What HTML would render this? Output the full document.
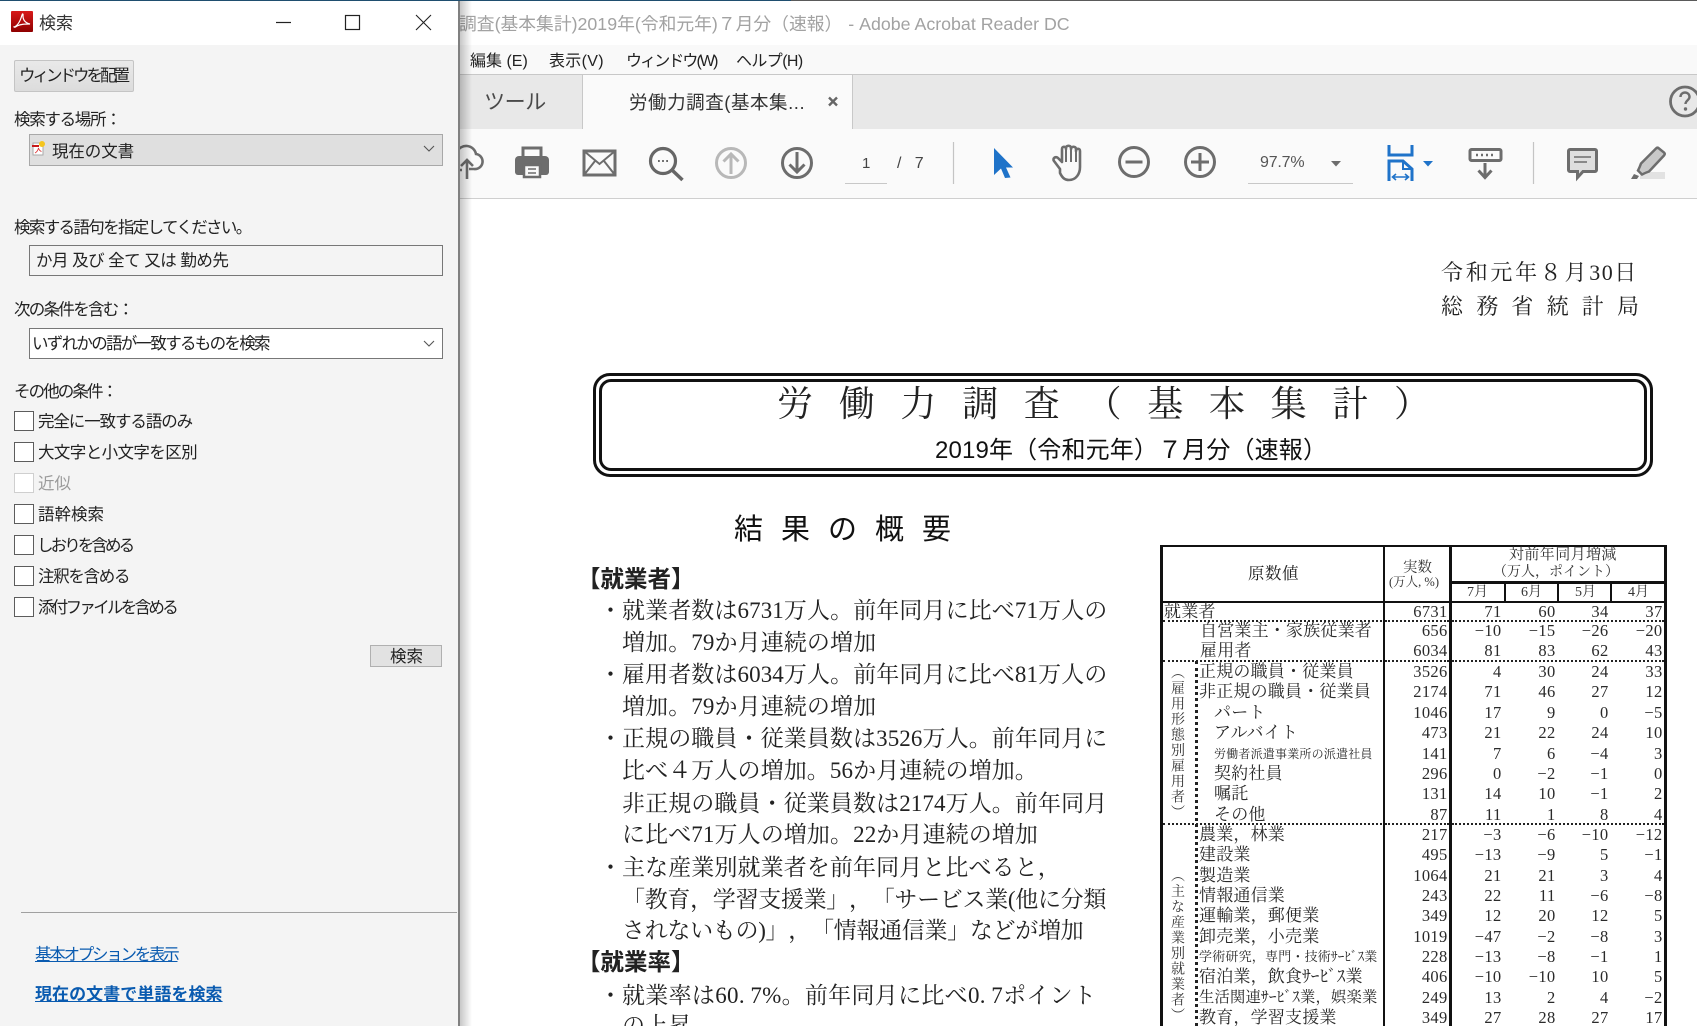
<!DOCTYPE html>
<html lang="ja"><head><meta charset="utf-8"><title>検索</title>
<style>
html,body{margin:0;padding:0;width:1697px;height:1026px;overflow:hidden;background:#fff}
body{position:relative;font-family:"Liberation Sans","Noto Sans CJK JP",sans-serif;color:#222;text-spacing-trim:space-all}
.b{position:absolute}
.t{position:absolute;white-space:nowrap;line-height:24px;height:24px}
.p{font-size:16.5px;color:#222}
.s{font-family:"Liberation Serif","Noto Serif CJK JP","Noto Serif CJK SC",serif;color:#222}
.m{font-size:23px;letter-spacing:.1px;left:622px;color:#222}
.dt{letter-spacing:.25em}
.cb{position:absolute;left:14px;width:18px;height:18px;border:1px solid #5c5c5c;background:#fff}
.r{position:absolute;left:0;width:1697px;height:20px;line-height:20px;font-family:"Liberation Serif","Noto Serif CJK JP","Noto Serif CJK SC",serif;font-size:16.5px;letter-spacing:.3px;color:#2a2a2a;white-space:nowrap}
.r span{position:absolute}
.r span:nth-child(1){left:1199px;font-size:17px;letter-spacing:.2px}
.r span:nth-child(2){right:249.5px}
.r span:nth-child(3){right:195.500px}
.r span:nth-child(4){right:141.500px}
.r span:nth-child(5){right:88.500px}
.r span:nth-child(6){right:34.500px}
.dh{position:absolute;height:0;border-top:2px dotted #222}
.k{position:absolute;background:#111}
.v{position:absolute;writing-mode:vertical-rl;white-space:nowrap;font-family:"Liberation Serif","Noto Serif CJK JP","Noto Serif CJK SC",serif;font-size:14px;letter-spacing:1.500px;color:#333}
</style></head><body>

<!-- Reader window chrome -->
<div class="b" style="left:0;top:0;width:791px;height:1px;background:#1f4e6f"></div>
<div class="b" style="left:791px;top:0;width:906px;height:1px;background:#5a5a5a"></div>
<div class="t" style="left:459px;top:12px;font-size:17.800px;color:#a2a2a2">調査(基本集計)2019年(令和元年)７月分（速報） <span style="margin-left:1px">- Adobe Acrobat Reader DC</span></div>

<div class="b" style="left:459px;top:45px;width:1238px;height:29px;background:#f9f9f9"></div>
<div class="t" style="left:470px;top:50px;font-size:16px;color:#222">編集 (E)</div>
<div class="t" style="left:549px;top:50px;font-size:16px;color:#222;letter-spacing:.3px">表示(V)</div>
<div class="t" style="left:626px;top:50px;font-size:16px;color:#222;letter-spacing:-1.900px">ウィンドウ(W)</div>
<div class="t" style="left:736px;top:50px;font-size:16px;color:#222;letter-spacing:-.600px">ヘルプ(H)</div>

<div class="b" style="left:459px;top:74px;width:1238px;height:54px;background:#e8e8e8;border-top:1px solid #c8c8c8;border-bottom:1px solid #c8c8c8"></div>
<div class="b" style="left:582px;top:75px;width:269px;height:55px;background:#fafafa;border-left:1px solid #c8c8c8;border-right:1px solid #c8c8c8"></div>
<div class="t" style="left:484px;top:91px;font-size:21px;color:#4a4a4a;letter-spacing:-.4px">ツール</div>
<div class="t" style="left:629px;top:91px;font-size:18.500px;color:#333;letter-spacing:.550px">労働力調査(基本集...</div>

<div class="b" style="left:459px;top:129px;width:1238px;height:69px;background:#fafafa;border-bottom:1px solid #cfcfcf"></div>
<div class="t" style="left:862px;top:152px;font-size:15px;color:#444">1</div>
<div class="t" style="left:897px;top:152px;font-size:16px;color:#444">/&nbsp;&nbsp;&nbsp;7</div>
<div class="t" style="left:1260px;top:151px;font-size:16px;color:#555;letter-spacing:-.200px">97.7%</div>

<svg class="b" style="left:0;top:0" width="1697" height="1026" viewBox="0 0 1697 1026" fill="none">
 <path d="M845 183.500H887M1248 183.500H1353" stroke="#c8c8c8"/>
 <path d="M953.500 142V184M1533.500 142V184" stroke="#c4c4c4" stroke-width="1.200"/>
 <path d="M462 170h-3a9 9 0 0 1-2-18a10 10 0 0 1 19 2a7.500 7.500 0 0 1-2 15h-5" stroke="#6d6d6d" stroke-width="2.600"/>
 <path d="M467 179V160M461 166l6-6 6 6" stroke="#6d6d6d" stroke-width="2.600"/>
 <rect x="523" y="148" width="18" height="10" stroke="#6d6d6d" stroke-width="3"/>
 <path d="M519 156h26a4 4 0 0 1 4 4v12a3 3 0 0 1-3 3h-28a3 3 0 0 1-3-3v-12a4 4 0 0 1 4-4z" fill="#6d6d6d"/>
 <rect x="524" y="165" width="16" height="12" fill="#fafafa" stroke="#6d6d6d" stroke-width="2.500"/>
 <path d="M528 169h8M528 173h8" stroke="#6d6d6d" stroke-width="1.500"/>
 <rect x="584" y="151" width="31" height="24" stroke="#6d6d6d" stroke-width="3"/>
 <path d="M584 151l15.500 13 15.500-13M584 175l11-14M615 175l-11-14" stroke="#6d6d6d" stroke-width="2"/>
 <circle cx="663" cy="161" r="12.500" stroke="#666" stroke-width="3.200"/>
 <path d="M672 170l10.500 10" stroke="#666" stroke-width="3.500"/>
 <path d="M658 161h1.800M662.100 161h1.800M666.200 161h1.800" stroke="#666" stroke-width="2"/>
 <circle cx="731" cy="163" r="14.500" stroke="#b8b8b8" stroke-width="3"/>
 <path d="M731 174V154M723.500 161.500L731 154l7.500 7.500" stroke="#b8b8b8" stroke-width="3"/>
 <circle cx="797" cy="163" r="14.500" stroke="#6d6d6d" stroke-width="3"/>
 <path d="M797 152V172M789.500 164.500L797 172l7.500-7.500" stroke="#6d6d6d" stroke-width="3"/>
 <path d="M994 148L1013 167.500H1006L1010.500 177.500L1005 178L1001 168.500L994 175Z" fill="#1f73c9"/>
 <path d="M1060 169l-6-8c-2-3 2-5 4-3l4 4v-13c0-3 4-3 4 0v-1c0-3 5-3 5 0v1c0-3 5-3 5 0v2c0-3 4-3 4 0v16c0 7-4 13-11 13c-5 0-7-3-9-7z" stroke="#6d6d6d" stroke-width="2.600" stroke-linejoin="round"/>
 <path d="M1066 149v13M1071 148v14M1076 149v13" stroke="#6d6d6d" stroke-width="2"/>
 <circle cx="1134" cy="162" r="14.500" stroke="#6d6d6d" stroke-width="3"/>
 <path d="M1125.500 162h17" stroke="#6d6d6d" stroke-width="3"/>
 <circle cx="1200" cy="162" r="14.500" stroke="#6d6d6d" stroke-width="3"/>
 <path d="M1191 162h18M1200 153v18" stroke="#6d6d6d" stroke-width="3"/>
 <path d="M1331 161h10l-5 5.500z" fill="#6d6d6d"/>
 <path d="M1389 145v10h23v-10" stroke="#1f73c9" stroke-width="3"/>
 <path d="M1389 181v-20h14l9 8v12" stroke="#1f73c9" stroke-width="3"/>
 <path d="M1403 161v8h9" stroke="#1f73c9" stroke-width="2"/>
 <path d="M1393 177h15M1396 174l-3.500 3 3.500 3M1405 174l3.500 3-3.500 3" stroke="#1f73c9" stroke-width="1.600"/>
 <path d="M1423 161h10l-5 5.500z" fill="#1f73c9"/>
 <rect x="1470" y="149.500" width="31" height="11" rx="1.500" stroke="#6d6d6d" stroke-width="3"/>
 <path d="M1476 155h2M1481 155h2M1486 155h2M1491 155h2" stroke="#6d6d6d" stroke-width="2.500"/>
 <path d="M1485 163V177M1478.500 170.500l6.500 7 6.500-7" stroke="#6d6d6d" stroke-width="3"/>
 <path d="M1570 149.500h25a1.500 1.500 0 0 1 1.500 1.500v19a1.500 1.500 0 0 1-1.500 1.500h-12l-5.500 6v-6h-7.500a1.500 1.500 0 0 1-1.500-1.500v-19a1.500 1.500 0 0 1 1.500-1.500z" fill="#dedede" stroke="#6d6d6d" stroke-width="3"/>
 <path d="M1574 157h17M1574 162h13" stroke="#6d6d6d" stroke-width="1.500"/>
 <path d="M1640 172h25v7h-25z" fill="#e2e2e2"/>
 <path d="M1659 148.500l5 4c1 1 1 2 0 3l-15 16c-3 1-5 2-7 3l-4-4c1-2 2-4 3-7l15-15c1-1 2-1 3 0z" fill="#c9c9c9" stroke="#6d6d6d" stroke-width="2.500"/>
 <path d="M1631 179l3-5 5 2-2 3z" fill="#6d6d6d"/>
 <circle cx="1685" cy="101.500" r="14.500" stroke="#6d6d6d" stroke-width="2.800"/>
 <path d="M1680.500 97c0-6 9-6 9 0c0 3-4 3.500-4 7" stroke="#6d6d6d" stroke-width="2.400"/>
 <circle cx="1685.500" cy="109" r="1.700" fill="#6d6d6d"/>
 <path d="M829 97.500l8 8M837 97.500l-8 8" stroke="#666" stroke-width="2.400"/>
</svg>

<!-- Document -->
<div class="t s" style="left:1441px;top:261px;font-size:22px;letter-spacing:2.700px">令和元年８月<span style="letter-spacing:1.500px">30</span>日</div>
<div class="t s" style="left:1441px;top:295px;font-size:22px;letter-spacing:13.200px">総務省統計局</div>

<div class="b" style="left:593px;top:373px;width:1054px;height:98px;border:3px solid #111;border-radius:17px"></div>
<div class="b" style="left:599px;top:379px;width:1042px;height:86px;border:3px solid #111;border-radius:12px"></div>
<div class="t s" style="left:777px;top:384px;height:40px;line-height:40px;font-size:36px;letter-spacing:25.700px">労働力調査（基本集計）</div>
<div class="t" style="left:935px;top:437px;height:28px;line-height:28px;font-size:24px;color:#111;letter-spacing:.150px">2019年（令和元年）７月分（速報）</div>
<div class="t" style="left:734px;top:510px;height:40px;line-height:40px;font-size:29px;letter-spacing:18px;color:#111">結果の概要</div>

<div class="t" style="left:577px;top:567px;font-size:23.500px;font-weight:700;color:#222">【就業者】</div>
<div class="t s m" style="left:599px;top:599px">・</div><div class="t s m" style="top:599px">就業者数は6731万人。前年同月に比べ71万人の</div>
<div class="t s m" style="top:631px">増加。79か月連続の増加</div>
<div class="t s m" style="left:599px;top:663px">・</div><div class="t s m" style="top:663px">雇用者数は6034万人。前年同月に比べ81万人の</div>
<div class="t s m" style="top:695px">増加。79か月連続の増加</div>
<div class="t s m" style="left:599px;top:727px">・</div><div class="t s m" style="top:727px">正規の職員・従業員数は3526万人。前年同月に</div>
<div class="t s m" style="top:759px">比べ４万人の増加。56か月連続の増加。</div>
<div class="t s m" style="top:792px">非正規の職員・従業員数は2174万人。前年同月</div>
<div class="t s m" style="top:823px">に比べ71万人の増加。22か月連続の増加</div>
<div class="t s m" style="left:599px;top:856px">・</div><div class="t s m" style="top:856px">主な産業別就業者を前年同月と比べると，</div>
<div class="t s m" style="top:888px;letter-spacing:-.3px">「教育，学習支援業」，「サービス業(他に分類</div>
<div class="t s m" style="top:919px;letter-spacing:-.3px">されないもの)」，「情報通信業」などが増加</div>
<div class="t" style="left:577px;top:950px;font-size:23.500px;font-weight:700;color:#222">【就業率】</div>
<div class="t s m" style="left:599px;top:984px">・</div><div class="t s m" style="top:984px;letter-spacing:.3px">就業率は60<span class="dt">.</span>7%。前年同月に比べ0<span class="dt">.</span>7ポイント</div>
<div class="t s m" style="top:1014px">の上昇</div>

<!-- Table frame -->
<div class="k" style="left:1160px;top:544.500px;width:507px;height:2.500px"></div>
<div class="k" style="left:1160px;top:544.500px;width:2.500px;height:481.500px"></div>
<div class="k" style="left:1664px;top:544.500px;width:3px;height:481.500px"></div>
<div class="k" style="left:1382.500px;top:544.500px;width:2.500px;height:481.500px"></div>
<div class="k" style="left:1449px;top:544.500px;width:3px;height:481.500px"></div>
<div class="k" style="left:1160px;top:600.500px;width:507px;height:2.500px"></div>
<div class="k" style="left:1449px;top:581px;width:218px;height:3px"></div>
<div class="k" style="left:1504px;top:581px;width:2px;height:20px"></div>
<div class="k" style="left:1557px;top:581px;width:2px;height:20px"></div>
<div class="k" style="left:1610px;top:581px;width:2px;height:20px"></div>
<div class="dh" style="left:1163px;top:619.500px;width:219px"></div>
<div class="dh" style="left:1385px;top:619.500px;width:64px"></div>
<div class="dh" style="left:1452px;top:619.500px;width:212px"></div>
<div class="dh" style="left:1163px;top:660px;width:219px"></div>
<div class="dh" style="left:1385px;top:660px;width:64px"></div>
<div class="dh" style="left:1452px;top:660px;width:212px"></div>
<div class="dh" style="left:1163px;top:823px;width:219px"></div>
<div class="dh" style="left:1385px;top:823px;width:64px"></div>
<div class="dh" style="left:1452px;top:823px;width:212px"></div>
<div class="b" style="left:1195px;top:661px;height:365px;width:0;border-left:3px dotted #222"></div>

<div class="t s" style="left:1248px;top:562px;font-size:16.500px;letter-spacing:.500px">原数値</div>
<div class="t s" style="left:1403px;top:556px;font-size:14.500px;color:#333">実数</div>
<div class="t s" style="left:1389px;top:570px;font-size:12.500px;color:#333">(万人, %)</div>
<div class="t s" style="left:1509px;top:543px;font-size:15px;letter-spacing:.400px;color:#333">対前年同月増減</div>
<div class="t s" style="left:1493px;top:561px;font-size:14px;color:#333">（万人，ポイント）</div>
<div class="t s" style="left:1467px;top:581px;font-size:14px;color:#333">7月</div>
<div class="t s" style="left:1521px;top:581px;font-size:14px;color:#333">6月</div>
<div class="t s" style="left:1575px;top:581px;font-size:14px;color:#333">5月</div>
<div class="t s" style="left:1628px;top:581px;font-size:14px;color:#333">4月</div>

<div class="v" style="left:1166px;top:665px">（雇用形態別雇用者）</div>
<div class="v" style="left:1166px;top:868px">（主な産業別就業者）</div>

<div class="r" style="top:602px"><span style="left:1164px">就業者</span><span>6731</span><span>71</span><span>60</span><span>34</span><span>37</span></div>
<div class="r" style="top:621px"><span style="left:1200px">自営業主・家族従業者</span><span>656</span><span>−10</span><span>−15</span><span>−26</span><span>−20</span></div>
<div class="r" style="top:641px"><span style="left:1200px">雇用者</span><span>6034</span><span>81</span><span>83</span><span>62</span><span>43</span></div>
<div class="r" style="top:662px"><span>正規の職員・従業員</span><span>3526</span><span>4</span><span>30</span><span>24</span><span>33</span></div>
<div class="r" style="top:682px"><span>非正規の職員・従業員</span><span>2174</span><span>71</span><span>46</span><span>27</span><span>12</span></div>
<div class="r" style="top:703px"><span style="left:1214px">パート</span><span>1046</span><span>17</span><span>9</span><span>0</span><span>−5</span></div>
<div class="r" style="top:723px"><span style="left:1214px">アルバイト</span><span>473</span><span>21</span><span>22</span><span>24</span><span>10</span></div>
<div class="r" style="top:744px"><span style="left:1214px;font-size:12px">労働者派遣事業所の派遣社員</span><span>141</span><span>7</span><span>6</span><span>−4</span><span>3</span></div>
<div class="r" style="top:764px"><span style="left:1214px">契約社員</span><span>296</span><span>0</span><span>−2</span><span>−1</span><span>0</span></div>
<div class="r" style="top:784px"><span style="left:1214px">嘱託</span><span>131</span><span>14</span><span>10</span><span>−1</span><span>2</span></div>
<div class="r" style="top:805px"><span style="left:1214px">その他</span><span>87</span><span>11</span><span>1</span><span>8</span><span>4</span></div>
<div class="r" style="top:825px"><span>農業，林業</span><span>217</span><span>−3</span><span>−6</span><span>−10</span><span>−12</span></div>
<div class="r" style="top:845px"><span>建設業</span><span>495</span><span>−13</span><span>−9</span><span>5</span><span>−1</span></div>
<div class="r" style="top:866px"><span>製造業</span><span>1064</span><span>21</span><span>21</span><span>3</span><span>4</span></div>
<div class="r" style="top:886px"><span>情報通信業</span><span>243</span><span>22</span><span>11</span><span>−6</span><span>−8</span></div>
<div class="r" style="top:906px"><span>運輸業，郵便業</span><span>349</span><span>12</span><span>20</span><span>12</span><span>5</span></div>
<div class="r" style="top:927px"><span>卸売業，小売業</span><span>1019</span><span>−47</span><span>−2</span><span>−8</span><span>3</span></div>
<div class="r" style="top:947px"><span style="font-size:13px">学術研究，専門・技術ｻｰﾋﾞｽ業</span><span>228</span><span>−13</span><span>−8</span><span>−1</span><span>1</span></div>
<div class="r" style="top:967px"><span>宿泊業，飲食ｻｰﾋﾞｽ業</span><span>406</span><span>−10</span><span>−10</span><span>10</span><span>5</span></div>
<div class="r" style="top:988px"><span style="font-size:15.300px">生活関連ｻｰﾋﾞｽ業，娯楽業</span><span>249</span><span>13</span><span>2</span><span>4</span><span>−2</span></div>
<div class="r" style="top:1008px"><span>教育，学習支援業</span><span>349</span><span>27</span><span>28</span><span>27</span><span>17</span></div>

<!-- Search panel -->
<div class="b" style="left:460px;top:1px;width:12px;height:1025px;background:linear-gradient(90deg,rgba(0,0,0,.22),rgba(0,0,0,0))"></div>
<div class="b" style="left:0;top:45px;width:458px;height:981px;background:#f4f4f4"></div>
<div class="b" style="left:0;top:1px;width:458px;height:44px;background:#fff"></div>
<div class="b" style="left:458px;top:1px;width:2px;height:1025px;background:#808080"></div>

<svg class="b" style="left:0;top:0" width="460" height="170" viewBox="0 0 460 170" fill="none">
 <defs><linearGradient id="rd" x1="0" y1="0" x2="0" y2="1"><stop offset="0" stop-color="#d81a1a"/><stop offset="1" stop-color="#8e0000"/></linearGradient></defs>
 <rect x="11" y="11" width="22" height="21" rx="1" fill="url(#rd)"/>
 <path d="M14 27c3-1 6-5 8-12c.5-2 1.500-1 1 1c0 5 3 7 7 8c-5 0-9 0-13 2c-1 .8-2.500 1.500-3 1z" stroke="#fff" stroke-width="1.200"/>
 <path d="M276 22.500h15" stroke="#222" stroke-width="1.200"/>
 <rect x="345.500" y="15.500" width="14" height="14" stroke="#222" stroke-width="1.200"/>
 <path d="M416 15l15 15M431 15l-15 15" stroke="#222" stroke-width="1.100"/>
</svg>
<div class="t" style="left:39px;top:12px;font-size:17px;color:#333">検索</div>

<div class="b" style="left:14px;top:60px;width:118px;height:30px;border:1px solid #c4c4c4;border-radius:2px;background:linear-gradient(#e9e9e9,#dcdcdc)"></div>
<div class="t p" style="left:19px;top:64px;font-size:16.500px;letter-spacing:-3px">ウィンドウを配置</div>

<div class="t p" style="left:14px;top:108px;letter-spacing:-1.300px">検索する場所：</div>
<div class="b" style="left:29px;top:134px;width:412px;height:30px;background:#dfdfdf;border:1px solid #a8a8a8"></div>
<svg class="b" style="left:30px;top:140px" width="18" height="18" viewBox="0 0 18 18" fill="none">
 <rect x="3" y="3" width="10" height="12" fill="#fff" stroke="#aaa"/>
 <rect x="2" y="5" width="7" height="2" fill="#c81a1a"/>
 <circle cx="12" cy="4" r="3" fill="#f5c51d"/>
 <path d="M5 13c2-1 3-3 3.500-5c.5 2 1.500 3 3 3.500" stroke="#d33" stroke-width=".8"/>
</svg>
<div class="t p" style="left:52px;top:139.500px;letter-spacing:-.1px">現在の文書</div>
<svg class="b" style="left:422px;top:144px" width="14" height="10" viewBox="0 0 14 10" fill="none"><path d="M2 2l5 5 5-5" stroke="#555" stroke-width="1.100"/></svg>

<div class="t p" style="left:14px;top:215.500px;letter-spacing:-1.650px">検索する語句を指定してください。</div>
<div class="b" style="left:29px;top:245px;width:412px;height:29px;background:#f4f4f4;border:1px solid #777"></div>
<div class="t p" style="left:36px;top:249px;letter-spacing:-.5px">か月 及び 全て 又は 勤め先</div>

<div class="t p" style="left:14px;top:298px;letter-spacing:-1.700px">次の条件を含む：</div>
<div class="b" style="left:29px;top:328px;width:412px;height:29px;background:#fff;border:1px solid #777"></div>
<div class="t p" style="left:32px;top:332px;letter-spacing:-1.700px">いずれかの語が一致するものを検索</div>
<svg class="b" style="left:422px;top:339px" width="14" height="10" viewBox="0 0 14 10" fill="none"><path d="M2 2l5 5 5-5" stroke="#555" stroke-width="1.100"/></svg>

<div class="t p" style="left:14px;top:380px;letter-spacing:-1.900px">その他の条件：</div>
<div class="cb" style="top:411px"></div><div class="t p" style="left:38px;top:410px;letter-spacing:-1.100px">完全に一致する語のみ</div>
<div class="cb" style="top:442px"></div><div class="t p" style="left:38px;top:441px;letter-spacing:-.600px">大文字と小文字を区別</div>
<div class="cb" style="top:473px;border-color:#cfcfcf"></div><div class="t p" style="left:38px;top:472px;color:#9a9a9a">近似</div>
<div class="cb" style="top:504px"></div><div class="t p" style="left:38px;top:503px">語幹検索</div>
<div class="cb" style="top:535px"></div><div class="t p" style="left:37px;top:534px;letter-spacing:-2.900px">しおりを含める</div>
<div class="cb" style="top:566px"></div><div class="t p" style="left:38px;top:565px;letter-spacing:-1.300px">注釈を含める</div>
<div class="cb" style="top:597px"></div><div class="t p" style="left:38px;top:596px;letter-spacing:-2.700px">添付ファイルを含める</div>

<div class="b" style="left:370px;top:645px;width:70px;height:20px;background:#e2e2e2;border:1px solid #b0b0b0"></div>
<div class="t p" style="left:390px;top:645px">検索</div>

<div class="b" style="left:21px;top:912px;width:436px;height:1px;background:#a0a0a0"></div>
<div class="t" style="left:35px;top:943px;font-size:16.500px;color:#0a5bb0;letter-spacing:-2.250px;text-decoration:underline">基本オプションを表示</div>
<div class="t" style="left:35px;top:983px;font-size:17px;font-weight:700;color:#0a5bb0;letter-spacing:.05px;text-decoration:underline">現在の文書で単語を検索</div>

</body></html>
